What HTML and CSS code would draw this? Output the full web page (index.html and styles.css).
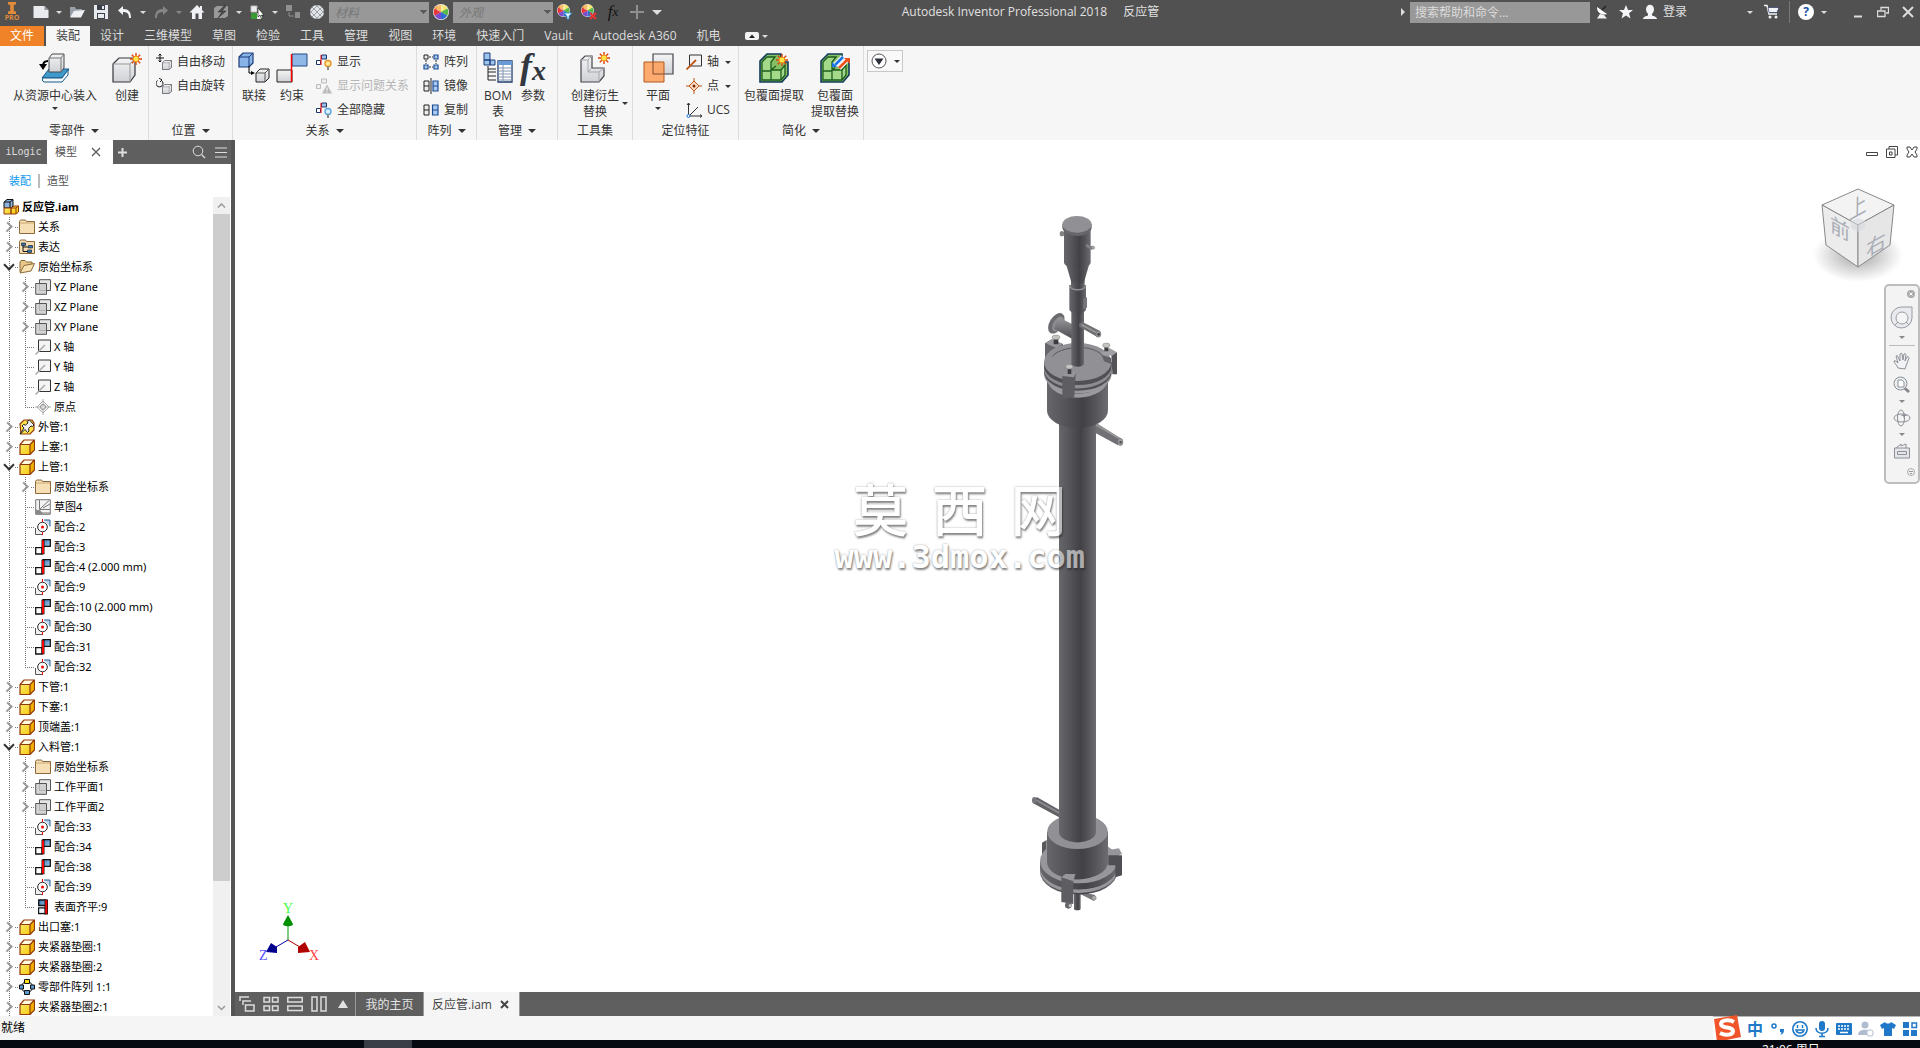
FILE: index.html
```html
<!DOCTYPE html>
<html lang="zh-CN">
<head>
    <meta charset="UTF-8">
    <meta name="viewport" content="width=device-width, initial-scale=1.0">
    <title>Autodesk Inventor Professional 2018 - 反应管</title>
    <link rel="stylesheet" href="styles.css">
</head>
<body>
    <!-- shared icons -->
    <svg class="sprite" aria-hidden="true">
        <defs>
            <linearGradient id="gYellow" x1="0" y1="0" x2="1" y2="1"><stop offset="0" stop-color="#fff27a"/><stop offset="1" stop-color="#f2c200"/></linearGradient>
            <linearGradient id="gBlue" x1="0" y1="0" x2="1" y2="1"><stop offset="0" stop-color="#3f80ba"/><stop offset="1" stop-color="#a4c9e8"/></linearGradient>
            <linearGradient id="gGray" x1="0" y1="0" x2="0" y2="1"><stop offset="0" stop-color="#f4f4f4"/><stop offset="1" stop-color="#cfd1d6"/></linearGradient>
        </defs>
        <symbol id="part" viewBox="0 0 16 16"><path d="M1 5.500 5 1h10.500v10l-4.500 4.500H1z" fill="url(#gYellow)"/><path d="M1 5.500 5 1h10.500L11 5.500z" fill="#fffce0"/><path d="M11 5.500 15.500 1v10L11 15.500z" fill="#f0b000"/><path d="M1 5.500 5 1h10.500v10L11 15.500H1zM1 5.500h10v10M11 5.500 15.500 1" fill="none" stroke="#93390a" stroke-width="1.200"/></symbol>
        <symbol id="pinned" viewBox="0 0 16 16"><path d="M1 5 5 1h8l2 3v7l-4 4H2z" fill="#ffe14a" stroke="#93390a" stroke-width="1.200"/><path d="M8 2.500 10.500 1l4.500 5-1.500 1.500-1.500-.5-2.500 2.500.5 2.500-1.500 1.500-2.500-3L2 14.500l-1 .5 4-6-2-2 1.500-1.500 2 .5L9 4z" fill="#eee" stroke="#111" stroke-width=".9"/></symbol>
        <symbol id="asm" viewBox="0 0 16 16"><path d="M1 3 4 .5h6V7L8 9H1z" fill="#8cb4dc" stroke="#111"/><path d="M1 3h6v6M7 3l3-2.500" fill="none" stroke="#111"/><path d="M1 9h7v6H1zM8 9l3-2h4.500v6L13 15H8z" fill="url(#gYellow)" stroke="#93390a"/><path d="M8 9h5v6M13 9l2.500-2" fill="none" stroke="#93390a"/></symbol>
        <symbol id="folder" viewBox="0 0 16 16"><path d="M.5 14.500v-12l1-1.500h5l1 1.500h8v12z" fill="#f6dfb4" stroke="#8a6a3a"/><path d="M1 4h14" stroke="#c9a870"/></symbol>
        <symbol id="folderOpen" viewBox="0 0 16 16"><path d="M1 13V3l1-1.500h4L7.500 3H13v3" fill="#e9c78a" stroke="#8a6a3a"/><path d="M1 14 5 6.500l10.500-2L12 12z" fill="#f8e2b4" stroke="#8a6a3a"/></symbol>
        <symbol id="rep" viewBox="0 0 16 16"><path d="M.5 14.500v-12l1-1.500h5l1 1.500h8v12z" fill="#f6dfb4" stroke="#8a6a3a"/><path d="M4 6v6.500h5M4 8h5" fill="none" stroke="#111"/><path d="M2.500 4h4v2.500h-4zM9.500 6.500h4V9h-4zM8.500 11h4v2.500h-4z" fill="#3d78b0" stroke="#123" stroke-width=".7"/></symbol>
        <symbol id="plane" viewBox="0 0 16 16"><path d="M4.500.7h11v10.800h-11z" fill="#e6e6e6" stroke="#555"/><path d="M.7 4.500h10.800v10.800H.7z" fill="#c9c9c9" fill-opacity=".8" stroke="#555"/></symbol>
        <symbol id="axis" viewBox="0 0 16 16"><path d="M3.500 1h12v11.500h-12z" fill="#f4f4f4" stroke="#333"/><path d="M.5 15.500 10 6" stroke="#aaa" stroke-width="1.500"/></symbol>
        <symbol id="origin" viewBox="0 0 16 16"><path d="M8 2l6 6-6 6-6-6zM8 0v5M8 11v5M0 8h5M11 8h5" fill="none" stroke="#aaa"/><circle cx="8" cy="8" r="2.500" fill="#ddd" stroke="#888"/></symbol>
        <symbol id="sketch" viewBox="0 0 16 16"><path d="M.7.700h14.600v14.600H.7z" fill="#f3f3f3" stroke="#777"/><path d="M4.500 1v9.500H15M1 10.500 4.500 14 15 14M5 10l9-8.500M8 9l7-4" fill="none" stroke="#777"/><path d="M1 11h4l3 4H1z" fill="#888"/></symbol>
        <symbol id="insert" viewBox="0 0 16 16"><path d="M9 1h6v6.500" fill="#b9d6ee" stroke="#2c5f93"/><path d="M.5 9v6.500H7" fill="#eee" stroke="#555"/><circle cx="7.500" cy="8" r="4.800" fill="#fff" stroke="#222"/><circle cx="7.500" cy="8" r="1.500" fill="#e00"/><path d="M7.500 0v3M7.500 13v3" stroke="#e00"/></symbol>
        <symbol id="mate" viewBox="0 0 16 16"><path d="M.7 8.700H7V15H.7z" fill="#fff" stroke="#111" stroke-width="1.300"/><path d="M8 .7h7.300v6.600H8z" fill="url(#gBlue)" stroke="#111" stroke-width="1.300"/><path d="M6.500.7h3v14.600h-3z" fill="#111"/><path d="M7 1.500h2v13H7z" fill="#f00"/></symbol>
        <symbol id="flush" viewBox="0 0 16 16"><path d="M3.700 1h7v5.500h-7zM3.700 9h7v5.500h-7z" fill="url(#gBlue)" stroke="#111" stroke-width="1.300"/><path d="M4.300 9.600h5v4.200h-5z" fill="#eef4fa"/><path d="M9.500.5h3.500v15H9.500z" fill="#111"/><path d="M10.300 1.200h2v13.500h-2z" fill="#f00"/></symbol>
        <symbol id="ring" viewBox="0 0 16 16"><circle cx="8" cy="8" r="5.500" fill="none" stroke="#111"/><path d="M5.500.5h5v4h-5z" fill="#ffe11a" stroke="#111"/><path d="M.5 6h4v4h-4zM11.500 6h4v4h-4zM5.500 11.500h5v4h-5z" fill="#5b9bd0" stroke="#111"/></symbol>

        <symbol id="wheel" viewBox="0 0 16 16"><circle cx="8" cy="8" r="8" fill="#eee"/><path d="M8 8V.7A7.300 7.300 0 0 0 1.700 4.400z" fill="#f7941d"/><path d="M8 8V.7a7.300 7.300 0 0 1 6.300 3.700z" fill="#f5e663"/><path d="M8 8l6.300-3.600a7.300 7.300 0 0 1 0 7.200z" fill="#59b947"/><path d="M8 8l6.300 3.600A7.300 7.300 0 0 1 8 15.300z" fill="#2d6fd0"/><path d="M8 8v7.300a7.300 7.300 0 0 1-6.300-3.700z" fill="#7b4bd0"/><path d="M8 8l-6.300 3.600a7.300 7.300 0 0 1 0-7.200z" fill="#e8373b"/><circle cx="7" cy="4" r="3.500" fill="#fff" opacity=".35"/></symbol>
        <symbol id="star" viewBox="0 0 12 12"><path d="M6 0v12M0 6h12M1.800 1.800l8.400 8.400M10.200 1.800 1.800 10.200" stroke="#d8420e" stroke-width="1.400"/><circle cx="6" cy="6" r="3" fill="#ffe34a" stroke="#f28c1a"/></symbol>
        <symbol id="cubeSm" viewBox="0 0 16 16"><path d="M.6 4.500 4.500.600h10.900v10.800l-4 4H.600z" fill="url(#gGray)" stroke="#44474d" stroke-width="1.200"/><path d="M.6 4.500h10.800v10.900M11.400 4.500l4-3.900" fill="none" stroke="#8a8d94"/></symbol>
    </svg>

    <header class="titlebar">
        <div class="qat">
            <button class="pro" aria-label="应用程序菜单"><svg width="10" height="12" viewBox="0 0 10 12"><path d="M1 0h8v2.500L6.800 3v6l2.200.5V12H1V9.500L3.200 9V3L1 2.500z" fill="#e08a3a"/></svg><span>PRO</span></button>
            <button class="tool" aria-label="新建"><svg width="16" height="14" viewBox="0 0 16 14"><path d="M.5 1h11l4 4v8H.5z" fill="#e9ebee"/><path d="M11.500 1v4h4z" fill="#8d929b"/></svg></button>
            <button class="drop" aria-label="更多"></button>
            <button class="tool" aria-label="打开"><svg width="16" height="14" viewBox="0 0 16 14"><path d="M1 12V2h5l1 2h6v2" fill="#999fa8"/><path d="M1 12.500 5 6l11-1-4 7.500z" fill="#eef0f3"/></svg></button>
            <button class="tool" aria-label="保存"><svg width="16" height="16" viewBox="0 0 16 16"><path d="M1 1h14v14H1z" fill="#e6e9ee"/><path d="M4 1h8v5H4zM4 9h8v6H4z" fill="#3d4048"/><path d="M5 10h6v4H5zM9 2h2v3H9z" fill="#e6e9ee"/></svg></button>
            <button class="tool" aria-label="放弃"><svg width="16" height="14" viewBox="0 0 16 14"><path d="M1 5.500 6 1v3c6 0 8 3 8 9h-2c0-4-1.500-6-6-6v3z" fill="#f2f3f5"/></svg></button>
            <button class="drop" aria-label="更多"></button>
            <button class="tool" aria-label="重做"><svg width="16" height="14" viewBox="0 0 16 14"><path d="M15 5.500 10 1v3c-6 0-8 3-8 9h2c0-4 1.500-6 6-6v3z" fill="#858585"/></svg></button>
            <button class="drop dim" aria-label="更多"></button>
            <button class="tool" aria-label="主页"><svg width="16" height="16" viewBox="0 0 16 16"><path d="M8 1 .5 8.500H3V15h10V8.500h2.500L13 6V2h-2v2z" fill="#f0f1f4"/><path d="M6.500 9.500h3V15h-3z" fill="#4a4d55"/></svg></button>
            <button class="tool" aria-label="更新"><svg width="16" height="16" viewBox="0 0 16 16"><path d="M1 4 4 2h11v10l-3 2H1z" fill="#9a9a9a"/><path d="M12 1 5 8h4l-4 6 8-7H9l4-5z" fill="#4a4a4a" stroke="#333" stroke-width=".6"/></svg></button>
            <button class="drop" aria-label="更多"></button>
            <button class="tool" aria-label="选择"><svg width="16" height="16" viewBox="0 0 16 16"><path d="M2 2h6v6H2z" fill="#eee" stroke="#bbb"/><path d="M2 9h6v6H2z" fill="#3a9b35"/><path d="M8 9h4v6H8z" fill="#eee"/><path d="M9 4v9l2-2 1.500 4 1.500-.5L12.500 11H15z" fill="#fff" stroke="#222" stroke-width=".7"/></svg></button>
            <button class="drop" aria-label="更多"></button>
            <button class="tool" aria-label="零部件"><svg width="16" height="16" viewBox="0 0 16 16"><path d="M1 1h6v6H1zM10 8h5v6h-5z" fill="#8f8f8f"/><path d="M4 8v4h5" fill="none" stroke="#8f8f8f"/></svg></button>
            <button class="tool" aria-label="材料浏览器"><svg width="16" height="16" viewBox="0 0 16 16"><circle cx="8" cy="8" r="7" fill="#e2e4e8"/><path d="M3 3l10 10M1 7l8 8M7 1l8 8M13 3 3 13M9 1 1 9M15 7l-8 8" stroke="#8a8e98" stroke-width=".8"/></svg></button>
            <select class="combo" aria-label="材料" disabled><option>材料</option></select>
            <button class="tool" aria-label="外观浏览器"><svg width="16" height="16"><use href="#wheel"/></svg></button>
            <select class="combo" aria-label="外观" disabled><option>外观</option></select>
            <button class="tool" aria-label="调整"><svg width="16" height="16" viewBox="0 0 16 16"><use href="#wheel" width="13" height="13"/><path d="M7 9h8l-3 3v3h-2v-3z" fill="#e8f6ff" stroke="#2a8fd0" stroke-width=".8"/></svg></button>
            <button class="tool" aria-label="清除"><svg width="16" height="16" viewBox="0 0 16 16"><use href="#wheel" width="13" height="13"/><path d="M9 9l6 6M15 9l-6 6" stroke="#e33" stroke-width="2"/></svg></button>
            <button class="tool fx" aria-label="参数"><i>f</i><sub>x</sub></button>
            <button class="tool" aria-label="添加"><svg width="14" height="14"><path d="M7 0v14M0 7h14" stroke="#8f8f8f" stroke-width="2"/></svg></button>
            <button class="drop custom" aria-label="自定义快速访问工具栏"></button>
        </div>
        <div class="caption"><span>Autodesk Inventor Professional 2018</span><span>反应管</span></div>
        <div class="infocenter">
            <button class="expand" aria-label="展开"></button>
            <input class="search" type="text" aria-label="搜索" placeholder="搜索帮助和命令...">
            <button class="tool" aria-label="通讯中心"><svg width="14" height="16" viewBox="0 0 14 16"><path d="M2 3c0 6 5 9 10 7z" fill="#fff"/><path d="M7 6l4-4" stroke="#222" stroke-width="1.500"/><path d="M5 10l-3 4.500h10L9 11z" fill="#f2f2f4"/></svg></button>
            <button class="tool" aria-label="收藏夹"><svg width="16" height="16" viewBox="0 0 16 16"><path d="M8 1l2 5h5l-4 3.300 1.500 5.200L8 11.500l-4.500 3L5 9.300 1 6h5z" fill="#f6f6f8"/></svg></button>
            <button class="login"><svg width="16" height="16" viewBox="0 0 16 16"><ellipse cx="8" cy="5.500" rx="4" ry="4.800" fill="#f2f3f6"/><path d="M1 15c0-2 3-3 5-3.500V9h4v2.500c2 .5 5 1.500 5 3.500z" fill="#f2f3f6"/></svg><span>登录</span></button>
            <button class="drop" aria-label="帐户"></button>
            <button class="tool cart" aria-label="应用商店"><svg width="16" height="16" viewBox="0 0 16 16"><path d="M0 1.500h3l2 8.500h8" fill="none" stroke="#f2f3f6" stroke-width="1.500"/><path d="M4 3.500h11l-2 5H5z" fill="#f2f3f6" stroke="#1d2a5c" stroke-width=".6"/><circle cx="6" cy="13" r="1.500" fill="#f2f3f6"/><circle cx="12" cy="13" r="1.500" fill="#f2f3f6"/></svg></button>
            <button class="tool help" aria-label="帮助"><span>?</span></button>
            <button class="drop" aria-label="更多"></button>
            <div class="winbtns">
                <button aria-label="最小化"><svg width="12" height="12"><path d="M2 10.500h8" stroke="#ddd" stroke-width="2"/></svg></button>
                <button aria-label="还原"><svg width="12" height="12"><path d="M4 4V1.500h7.500V7H9M.5 5H8v5.500H.5z" fill="none" stroke="#ddd" stroke-width="1.300"/></svg></button>
                <button aria-label="关闭"><svg width="12" height="12"><path d="M1 1l10 10M11 1 1 11" stroke="#ddd" stroke-width="2"/></svg></button>
            </div>
        </div>
    </header>

    <nav class="tabs">
        <button class="tab file">文件</button>
        <button class="tab active">装配</button>
        <button class="tab">设计</button>
        <button class="tab">三维模型</button>
        <button class="tab">草图</button>
        <button class="tab">检验</button>
        <button class="tab">工具</button>
        <button class="tab">管理</button>
        <button class="tab">视图</button>
        <button class="tab">环境</button>
        <button class="tab">快速入门</button>
        <button class="tab">Vault</button>
        <button class="tab">Autodesk A360</button>
        <button class="tab">机电</button>
        <button class="tab-toggle" aria-label="最小化功能区"><svg width="14" height="8"><rect width="14" height="8" rx="2" fill="#f2f2f2"/><path d="M4 6h6L7 2.500z" fill="#222"/></svg></button>
        <button class="drop" aria-label="更多"></button>
    </nav>

    <section class="ribbon">
        <div class="panel p-component">
            <div class="tools">
                <button class="big"><svg width="32" height="32" viewBox="0 0 32 32"><path d="M3 26l7-9h20l-7 9z" fill="#3d9acb" stroke="#185a87"/><path d="M4 26h19l6-8v5l-6 7H5c-2-1-2-3-1-4z" fill="#f4f8fb" stroke="#185a87"/><path d="M10 6l3-4h12v14l-3 4H10z" fill="url(#gGray)" stroke="#44474d"/><path d="M10 6h12v14M22 6l3-4" fill="none" stroke="#777"/><path d="M9 9c-4 0-5 2-5 5" fill="none" stroke="#000" stroke-width="2"/><path d="M0 12h8l-4 6z"/></svg><span>从资源中心装入</span><b class="caret"></b></button>
                <button class="big"><svg width="32" height="32" viewBox="0 0 32 32"><path d="M2 12l6-6h16v17l-5 7H2z" fill="url(#gGray)" stroke="#33363c" stroke-width="1.200"/><path d="M2 12h17v18M19 12l5-6" fill="none" stroke="#999"/><use href="#star" x="19" y="1" width="12" height="12"/></svg><span>创建</span></button>
            </div>
            <button class="panel-title">零部件<b class="caret wide"></b></button>
        </div>
        <div class="panel p-position">
            <div class="tools"><div class="stack">
                <button class="small"><svg width="16" height="16" viewBox="0 0 16 16"><path d="M4 0v8M0 4h8M2.500 1.500 4 0l1.500 1.500M2.500 6.500 4 8l1.500-1.500" fill="none" stroke="#111"/><use href="#cubeSm" x="6" y="6" width="10" height="10"/></svg><span>自由移动</span></button>
                <button class="small"><svg width="16" height="16" viewBox="0 0 16 16"><path d="M1.500 2.500a3.500 3.500 0 1 0 4 0M3 0l3 2-2 2" fill="none" stroke="#111"/><use href="#cubeSm" x="6" y="6" width="10" height="10"/></svg><span>自由旋转</span></button>
            </div></div>
            <button class="panel-title">位置<b class="caret wide"></b></button>
        </div>
        <div class="panel p-relation">
            <div class="tools">
                <button class="big"><svg width="32" height="32" viewBox="0 0 32 32"><path d="M1 5l4-4h10v10l-4 4H1z" fill="#88b4e8" stroke="#1c3c7a" stroke-width="1.200"/><path d="M1 5h10v10M11 5l4-4" fill="none" stroke="#1c3c7a"/><path d="M18 21l4-4h9v9l-4 4h-9z" fill="url(#gGray)" stroke="#222"/><path d="M18 21h9v9M27 21l4-4" fill="none" stroke="#555"/><path d="M11 14v7h3" fill="none" stroke="#000"/><path d="M13 19l4 2-4 2z"/></svg><span>联接</span></button>
                <button class="big"><svg width="32" height="32" viewBox="0 0 32 32"><path d="M16 2h15v12H16z" fill="#8fb8e6" stroke="#234a86"/><path d="M1 18h15v12H1z" fill="url(#gGray)" stroke="#222"/><path d="M15.500 2v28" stroke="#f00" stroke-width="1.500"/></svg><span>约束</span></button>
                <div class="stack">
                    <button class="small"><svg width="16" height="16" viewBox="0 0 16 16"><path d="M.5 6.500h4v4h-4z" fill="#fff" stroke="#17346b"/><path d="M5.500 1h5v4h-5z" fill="#9cc0ea" stroke="#17346b"/><path d="M5 1v10" stroke="#f00"/><circle cx="12" cy="9.500" r="3" fill="#ffe9a0" stroke="#e9931a" stroke-width="1.300"/><path d="M11 12.500h2V16h-2z" fill="#888"/></svg><span>显示</span></button>
                    <button class="small" disabled><svg width="16" height="16" viewBox="0 0 16 16"><path d="M.5 6.500h4v4h-4zM5.500 1h5v4h-5z" fill="#eee" stroke="#bbb"/><path d="M11 6.500l5 9H6z" fill="#bbb"/><path d="M11 9.500v3M11 13.500v1" stroke="#fff"/></svg><span>显示问题关系</span></button>
                    <button class="small"><svg width="16" height="16" viewBox="0 0 16 16"><path d="M.5 6.500h4v4h-4z" fill="#fff" stroke="#17346b"/><path d="M5.500 1h5v4h-5z" fill="#9cc0ea" stroke="#17346b"/><path d="M5 1v10" stroke="#f00"/><circle cx="12" cy="9.500" r="3" fill="#d8efff" stroke="#5aa2dd" stroke-width="1.300"/><path d="M11 12.500h2V16h-2z" fill="#888"/></svg><span>全部隐藏</span></button>
                </div>
            </div>
            <button class="panel-title">关系<b class="caret wide"></b></button>
        </div>
        <div class="panel p-pattern">
            <div class="tools"><div class="stack">
                <button class="small"><svg width="16" height="16" viewBox="0 0 16 16"><path d="M1 1h4v4H1z" fill="#eee" stroke="#222"/><path d="M11 1h4v4h-4zM1 11h4v4H1zM11 11h4v4h-4z" fill="#a9caf0" stroke="#1d4c94" stroke-width="1.200"/><path d="M6 3h4M3 6v4M6 13h4M13 6v4" stroke="#222" stroke-dasharray="2 1"/></svg><span>阵列</span></button>
                <button class="small"><svg width="16" height="16" viewBox="0 0 16 16"><path d="M1 3h5v10H1zM1 8h5" fill="#eee" stroke="#222"/><path d="M10 3h5v10h-5zM10 8h5" fill="#a9caf0" stroke="#1d4c94" stroke-width="1.200"/><path d="M8 0v16" stroke="#222"/></svg><span>镜像</span></button>
                <button class="small"><svg width="16" height="16" viewBox="0 0 16 16"><path d="M1 3h5v10H1zM1 8h5" fill="#eee" stroke="#222"/><path d="M9.500 3h5.500v10H9.500zM9.500 8H15" fill="#a9caf0" stroke="#1d4c94" stroke-width="1.200"/></svg><span>复制</span></button>
            </div></div>
            <button class="panel-title">阵列<b class="caret wide"></b></button>
        </div>
        <div class="panel p-manage">
            <div class="tools">
                <button class="big"><svg width="32" height="32" viewBox="0 0 32 32"><path d="M2 1h6v7H2zM2 8h6v5H2zM8 8h5v5H8z" fill="#9cc4ee" stroke="#1c3c7a"/><path d="M6 14v14M6 17h8M6 20h8M6 24h8M6 28h8" stroke="#222" fill="none"/><path d="M16 9h14v21H16z" fill="#fff" stroke="#1f3d6b" stroke-width="1.300"/><path d="M16 9h14v4H16z" fill="#6b9bd6"/><path d="M16 16h14M16 19h14M16 22h14M16 25h14M16 28h14M21 13v17" stroke="#8195b0"/></svg><span>BOM<br>表</span></button>
                <button class="big"><span class="fxbig"><i>f</i><i class="x">x</i></span><span>参数</span></button>
            </div>
            <button class="panel-title">管理<b class="caret wide"></b></button>
        </div>
        <div class="panel p-toolset">
            <div class="tools">
                <button class="big"><svg width="32" height="32" viewBox="0 0 32 32"><path d="M2 8l4-4h7v12h12v8l-5 6H2z" fill="url(#gGray)" stroke="#44474d" stroke-width="1.200"/><path d="M2 8h7v12h11v10M9 8l4-4M9 20l4-4M20 20l5-4" fill="none" stroke="#a5a8ae"/><use href="#star" x="19" y="0" width="12" height="12"/></svg><span>创建衍生<br>替换</span></button>
                <b class="caret side"></b>
            </div>
            <span class="panel-title">工具集</span>
        </div>
        <div class="panel p-feature">
            <div class="tools">
                <button class="big"><svg width="32" height="32" viewBox="0 0 32 32"><path d="M11 2h20v20H11z" fill="url(#gGray)" stroke="#44474d" stroke-width="1.200"/><path d="M2 10h20v20H2z" fill="#ff9e57" fill-opacity=".85" stroke="#b05a20"/><path d="M11 10v12h11" fill="none" stroke="#87583c"/></svg><span>平面</span><b class="caret"></b></button>
                <div class="stack">
                    <button class="small"><svg width="16" height="16" viewBox="0 0 16 16"><path d="M3.500 1h12v11h-12z" fill="#f4f4f4" stroke="#333"/><path d="M.5 15.500 10 6" stroke="#c1561a" stroke-width="1.800"/></svg><span>轴</span><b class="caret"></b></button>
                    <button class="small"><svg width="16" height="16" viewBox="0 0 16 16"><path d="M8 3l5 5-5 5-5-5z" fill="#ffd9bd" stroke="#c1561a"/><path d="M8 0v4M8 12v4M0 8h4M12 8h4" stroke="#c1561a"/><circle cx="8" cy="8" r="1.500" fill="#7a2d05"/></svg><span>点</span><b class="caret"></b></button>
                    <button class="small"><svg width="16" height="16" viewBox="0 0 16 16"><path d="M2.500 1v13H16M3 14 12 5M1 3l1.500-2L4 3M14 12.500l2 1.500-2 1.500" fill="none" stroke="#333"/><circle cx="2.500" cy="14" r="1.500" fill="#fff" stroke="#1a73d9"/></svg><span>UCS</span></button>
                </div>
            </div>
            <span class="panel-title">定位特征</span>
        </div>
        <div class="panel p-simplify">
            <div class="tools">
                <button class="big"><svg width="32" height="32" viewBox="0 0 32 32"><path d="M2 9l7-7h14v8h7v13l-6 7H2z" fill="#86c063" stroke="#123a5c" stroke-width="1.600"/><path d="M4 10l5-5h8l-4 5v8h10l4-5v10l-4 5H4zM4 19h9v9M13 18l5-4M23 18v10" fill="#a5d98a" stroke="#1d5c1d" stroke-width="1.300"/><use href="#star" x="18" y="2" width="12" height="12"/></svg><span>包覆面提取</span></button>
                <button class="big"><svg width="32" height="32" viewBox="0 0 32 32"><path d="M2 9l7-7h14v8h7v13l-6 7H2z" fill="#86c063" stroke="#123a5c" stroke-width="1.600"/><path d="M4 10l5-5h8l-4 5v8h10l4-5v10l-4 5H4zM4 19h9v9M13 18l5-4M23 18v10" fill="#a5d98a" stroke="#1d5c1d" stroke-width="1.300"/><path d="M24 5l-9 9M20 16l9-9" stroke="#f6f6f6" stroke-width="5"/><path d="M24 5l-8 8" stroke="#1a73e8" stroke-width="2.500"/><path d="M13 10v5h5z" fill="#1a73e8"/><path d="M20 16l8-8" stroke="#f0501a" stroke-width="2.500"/><path d="M25 6h6v6z" fill="#f0501a"/></svg><span>包覆面<br>提取替换</span></button>
            </div>
            <button class="panel-title">简化<b class="caret wide"></b></button>
        </div>
        <button class="ribbon-more" aria-label="显示面板"><svg width="16" height="16"><circle cx="8" cy="8" r="7" fill="#fff" stroke="#555"/><path d="M3.500 5.500h9L8 12z" fill="#2b3038"/></svg><b class="caret"></b></button>
    </section>

    <div class="workspace">
        <aside class="browser">
            <div class="browser-tabs">
                <button class="btab ilogic">iLogic</button>
                <div class="btab on"><span>模型</span><button aria-label="关闭模型"><svg width="10" height="10"><path d="M1 1l8 8M9 1 1 9" stroke="#555" stroke-width="1.200"/></svg></button></div>
                <button class="add" aria-label="添加面板"><svg width="9" height="9"><path d="M4.500 0v9M0 4.500h9" stroke="#ddd" stroke-width="2"/></svg></button>
                <button aria-label="查找"><svg width="14" height="14"><circle cx="6" cy="6" r="4.800" fill="none" stroke="#ddd"/><path d="M9.500 9.500 13 13" stroke="#ddd" stroke-width="1.300"/></svg></button>
                <button aria-label="菜单"><svg width="12" height="11"><path d="M0 1h12M0 5.500h12M0 10h12" stroke="#ddd" stroke-width="1.200"/></svg></button>
            </div>
            <div class="modes"><a class="current" href="#assembly">装配</a><a href="#modeling">造型</a></div>
            <div class="tree-wrap">
                <div class="tree">
                    <div class="root"><svg class="ico"><use href="#asm"/></svg>反应管.iam</div>
                    <ul>
                        <li><div class="row"><button class="twist" aria-label="展开"></button><svg class="ico"><use href="#folder"/></svg>关系</div></li>
                        <li><div class="row"><button class="twist" aria-label="展开"></button><svg class="ico"><use href="#rep"/></svg>表达</div></li>
                        <li><div class="row"><button class="twist open" aria-label="折叠"></button><svg class="ico"><use href="#folderOpen"/></svg>原始坐标系</div>
                            <ul>
                                <li><div class="row"><button class="twist" aria-label="展开"></button><svg class="ico"><use href="#plane"/></svg>YZ Plane</div></li>
                                <li><div class="row"><button class="twist" aria-label="展开"></button><svg class="ico"><use href="#plane"/></svg>XZ Plane</div></li>
                                <li><div class="row"><button class="twist" aria-label="展开"></button><svg class="ico"><use href="#plane"/></svg>XY Plane</div></li>
                                <li><div class="row leaf"><svg class="ico"><use href="#axis"/></svg>X 轴</div></li>
                                <li><div class="row leaf"><svg class="ico"><use href="#axis"/></svg>Y 轴</div></li>
                                <li><div class="row leaf"><svg class="ico"><use href="#axis"/></svg>Z 轴</div></li>
                                <li><div class="row leaf"><svg class="ico"><use href="#origin"/></svg>原点</div></li>
                            </ul>
                        </li>
                        <li><div class="row"><button class="twist" aria-label="展开"></button><svg class="ico"><use href="#pinned"/></svg>外管:1</div></li>
                        <li><div class="row"><button class="twist" aria-label="展开"></button><svg class="ico"><use href="#part"/></svg>上塞:1</div></li>
                        <li><div class="row"><button class="twist open" aria-label="折叠"></button><svg class="ico"><use href="#part"/></svg>上管:1</div>
                            <ul>
                                <li><div class="row"><button class="twist" aria-label="展开"></button><svg class="ico"><use href="#folder"/></svg>原始坐标系</div></li>
                                <li><div class="row leaf"><svg class="ico"><use href="#sketch"/></svg>草图4</div></li>
                                <li><div class="row leaf"><svg class="ico"><use href="#insert"/></svg>配合:2</div></li>
                                <li><div class="row leaf"><svg class="ico"><use href="#mate"/></svg>配合:3</div></li>
                                <li><div class="row leaf"><svg class="ico"><use href="#mate"/></svg>配合:4 (2.000 mm)</div></li>
                                <li><div class="row leaf"><svg class="ico"><use href="#insert"/></svg>配合:9</div></li>
                                <li><div class="row leaf"><svg class="ico"><use href="#mate"/></svg>配合:10 (2.000 mm)</div></li>
                                <li><div class="row leaf"><svg class="ico"><use href="#insert"/></svg>配合:30</div></li>
                                <li><div class="row leaf"><svg class="ico"><use href="#mate"/></svg>配合:31</div></li>
                                <li><div class="row leaf"><svg class="ico"><use href="#insert"/></svg>配合:32</div></li>
                            </ul>
                        </li>
                        <li><div class="row"><button class="twist" aria-label="展开"></button><svg class="ico"><use href="#part"/></svg>下管:1</div></li>
                        <li><div class="row"><button class="twist" aria-label="展开"></button><svg class="ico"><use href="#part"/></svg>下塞:1</div></li>
                        <li><div class="row"><button class="twist" aria-label="展开"></button><svg class="ico"><use href="#part"/></svg>顶端盖:1</div></li>
                        <li><div class="row"><button class="twist open" aria-label="折叠"></button><svg class="ico"><use href="#part"/></svg>入料管:1</div>
                            <ul>
                                <li><div class="row"><button class="twist" aria-label="展开"></button><svg class="ico"><use href="#folder"/></svg>原始坐标系</div></li>
                                <li><div class="row"><button class="twist" aria-label="展开"></button><svg class="ico"><use href="#plane"/></svg>工作平面1</div></li>
                                <li><div class="row"><button class="twist" aria-label="展开"></button><svg class="ico"><use href="#plane"/></svg>工作平面2</div></li>
                                <li><div class="row leaf"><svg class="ico"><use href="#insert"/></svg>配合:33</div></li>
                                <li><div class="row leaf"><svg class="ico"><use href="#mate"/></svg>配合:34</div></li>
                                <li><div class="row leaf"><svg class="ico"><use href="#mate"/></svg>配合:38</div></li>
                                <li><div class="row leaf"><svg class="ico"><use href="#insert"/></svg>配合:39</div></li>
                                <li><div class="row leaf"><svg class="ico"><use href="#flush"/></svg>表面齐平:9</div></li>
                            </ul>
                        </li>
                        <li><div class="row"><button class="twist" aria-label="展开"></button><svg class="ico"><use href="#part"/></svg>出口塞:1</div></li>
                        <li><div class="row"><button class="twist" aria-label="展开"></button><svg class="ico"><use href="#part"/></svg>夹紧器垫圈:1</div></li>
                        <li><div class="row"><button class="twist" aria-label="展开"></button><svg class="ico"><use href="#part"/></svg>夹紧器垫圈:2</div></li>
                        <li><div class="row"><button class="twist" aria-label="展开"></button><svg class="ico"><use href="#ring"/></svg>零部件阵列 1:1</div></li>
                        <li><div class="row"><button class="twist" aria-label="展开"></button><svg class="ico"><use href="#part"/></svg>夹紧器垫圈2:1</div></li>
                    </ul>
                </div>
                <div class="scrollbar">
                    <svg width="17" height="17"><path d="M5 10.500 8.500 7l3.500 3.500" fill="none" stroke="#999" stroke-width="1.500"/></svg>
                    <div class="thumb"></div>
                    <svg width="17" height="17"><path d="M5 7l3.500 3.500L12 7" fill="none" stroke="#999" stroke-width="1.500"/></svg>
                </div>
            </div>
        </aside>

        <main class="document">
            <div class="canvas">
                <svg class="model" viewBox="0 0 540 2160" role="img" aria-label="反应管模型">
                    <defs>
                        <linearGradient id="tube"><stop offset="0" stop-color="#67676b"/><stop offset=".25" stop-color="#58585c"/><stop offset=".58" stop-color="#424246"/><stop offset=".75" stop-color="#505055"/><stop offset="1" stop-color="#6c6c71"/></linearGradient>
                        <linearGradient id="rod" x1="0" y1="0" x2="0" y2="1"><stop offset="0" stop-color="#99999c"/><stop offset="1" stop-color="#4e4e52"/></linearGradient>
                    </defs>
                    <!-- side pipes behind the main tube -->
                    <path d="M300 672l14-6 80 50-10 20-84-46z" fill="#717175"/>
                    <path d="M314 672l76 44" stroke="#98989b" stroke-width="5"/>
                    <ellipse cx="391" cy="726" rx="8" ry="11" fill="#9b9b9e" stroke="#555"/><circle cx="392" cy="727" r="4" fill="#555"/>
                    <path d="M140 1791l70 40v22l-82-44z" fill="#626266"/><path d="M138 1800l72 40" stroke="#8c8c90" stroke-width="6"/><ellipse cx="133" cy="1801" rx="7" ry="10" fill="#77777b"/>
                    <!-- upper flange and clamps -->
                    <path d="M165 430l20-12 34 14v40l-54 10z" fill="#66666a"/><path d="M167 430l18-12 32 14-18 12z" fill="#9a9a9e"/>
                    <path d="M207 640h111v1270H207z" fill="url(#tube)"/>
                    <path d="M171 520v112a91 52 0 0 0 183 0V520z" fill="url(#tube)"/>
                    <path d="M172 536a91 57 0 0 0 182 0l-8-20H180z" fill="#9b9b9f"/>
                    <path d="M172 524a91 57 0 0 0 182 0l-8-20H180z" fill="url(#tube)"/>
                    <path d="M162 507a101 57 0 0 0 203 0v15a101 58 0 0 1-203 0z" fill="#99999d"/>
                    <path d="M162 487v28a101 57 0 0 0 203 0v-28z" fill="#515155"/>
                    <path d="M162 498v10a101 57 0 0 0 203 0v-10a101 57 0 0 1-203 0z" fill="#8d8d91"/>
                    <path d="M162 487v8a101 57 0 0 0 203 0v-8z" fill="#515155"/>
                    <ellipse cx="263" cy="486" rx="101" ry="57" fill="#919195"/>
                    <path d="M188 469c15-28 130-44 154 6" fill="none" stroke="#5c5c60" stroke-width="3"/>
                    <path d="M364 462l17-5v66h-14z" fill="#535357"/><path d="M334 458l24-14 23 13-15 10-25-3z" fill="#a0a0a4"/><path d="M336 466l28 8v18l-22-8z" fill="#626266"/>
                    <path d="M217 528l8-8 32 2-4 68-36 8z" fill="#5e5e62"/><path d="M217 528l12-16 28 6-5 14z" fill="#95959a"/>
                    <!-- bolts -->
                    <path d="M191 415h14v18h-14zM343 440h12v14h-12zM233 508h11v14h-11z" fill="#3c3c40"/>
                    <ellipse cx="198" cy="412" rx="12" ry="7" fill="#c3c3bf" stroke="#555"/><ellipse cx="349" cy="436" rx="11" ry="7" fill="#c3c3bf" stroke="#555"/><ellipse cx="238" cy="500" rx="11" ry="7" fill="#c3c3bf" stroke="#555"/>
                    <!-- side inlet -->
                    <ellipse cx="199" cy="370" rx="20" ry="34" fill="#6c6c70" transform="rotate(32 199 370)"/><ellipse cx="204" cy="372" rx="14" ry="25" fill="#8d8d91" transform="rotate(32 204 372)"/>
                    <path d="M206 352l40 20v44l-54-30z" fill="url(#rod)"/>
                    <!-- feed pipe -->
                    <path d="M244 325v166a19 9 0 0 0 38 0V325z" fill="url(#tube)"/>
                    <path d="M268 370l10-4 52 27-8 18-54-31z" fill="#707074"/><path d="M275 374l48 26" stroke="#999" stroke-width="5"/><ellipse cx="325" cy="402" rx="8" ry="10" fill="#939397" stroke="#555"/><circle cx="326" cy="403" r="4" fill="#444"/>
                    <path d="M238 256v72a25 12 0 0 0 50 0v-72z" fill="url(#tube)"/>
                    <path d="M238 256a25 14 0 0 0 50 0" fill="#77777b" stroke="#a0a0a4" stroke-width="3"/>
                    <path d="M280 295l11-3v31l-11 5z" fill="#77777b"/>
                    <path d="M243 236v20a20 11 0 0 0 41 0v-20z" fill="url(#tube)"/>
                    <path d="M226 185l17 58a20 8 0 0 0 40 0l17-58z" fill="url(#tube)"/>
                    <ellipse cx="216" cy="101" rx="7" ry="8" fill="#828286"/>
                    <path d="M222 75v112a40 18 0 0 0 80 0V75z" fill="url(#tube)"/>
                    <path d="M217 72v10a44 26 0 0 0 88 0V72z" fill="#67676b"/>
                    <ellipse cx="261" cy="73" rx="44" ry="25" fill="#919195"/>
                    <path d="M288 132l22 8-4 10-18-10z" fill="#828286"/><circle cx="309" cy="143" r="5" fill="#aaa" stroke="#555"/>
                    <!-- lower flange -->
                    <g transform="translate(0 1740)">
                        <path d="M156 188l14-8v50h-14z" fill="#5a5a5e"/>
                        <path d="M275 335l40 10-3 18-40-20z" fill="#77777b"/><circle cx="312" cy="354" r="7" fill="#aaa" stroke="#555"/>
                        <path d="M252 330h20v56a10 5 0 0 1-20 0z" fill="url(#tube)"/>
                        <path d="M150 243v32a113 67 0 0 0 232 0v-32z" fill="url(#tube)"/>
                        <path d="M150 260v10a113 67 0 0 0 232 0v-10a113 67 0 0 1-232 0z" fill="#97979b"/>
                        <path d="M150 243v16a113 67 0 0 0 232 0v-16z" fill="url(#tube)"/>
                        <ellipse cx="266" cy="243" rx="116" ry="67" fill="#97979b"/>
                        <path d="M171 155v91a91 52 0 0 0 183 0v-91z" fill="url(#tube)"/>
                        <ellipse cx="262.500" cy="155" rx="91" ry="52" fill="#919195"/>
                        <path d="M207 20v136a55 31 0 0 0 111 0V20z" fill="url(#tube)"/>
                        <path d="M355 210l32-5 9 17-20 8h-21z" fill="#97979b"/><path d="M355 226h41v60l-20 6v-36h-21z" fill="#505054"/>
                        <path d="M214 290l10-8h30l-4 20v70l-36-6z" fill="#5e5e62"/><path d="M214 292l12-10h30l-6 22z" fill="#95959a"/><circle cx="235" cy="376" r="10" fill="#67676b"/><circle cx="240" cy="377" r="4" fill="#ccc"/>
                    </g>
                </svg>

                <div class="watermark">
                    <div class="wm-name"><span>莫</span><span>西</span><span>网</span></div>
                    <div class="wm-url">www.3dmox.com</div>
                </div>

                <div class="docbtns">
                    <button aria-label="最小化文档"><svg width="12" height="12"><path d="M.5 6.500h11v3H.5z" fill="#fff" stroke="#444"/></svg></button>
                    <button aria-label="还原文档"><svg width="12" height="12"><path d="M3 3V.5h8.500V9H9M.5 3H9v8.500H.5zM3.500 6h2.500v3H3.500z" fill="none" stroke="#444"/></svg></button>
                    <button aria-label="关闭文档"><svg width="12" height="12"><path d="M1 1h3l2 3 2-3h3v2L9 6l2 3v2H8L6 8l-2 3H1V9l2-3-2-3z" fill="#fff" stroke="#444"/></svg></button>
                </div>

                <svg class="viewcube" width="92" height="100" viewBox="0 0 92 100" role="img" aria-label="ViewCube">
                    <defs><radialGradient id="shade"><stop offset="0" stop-color="#888" stop-opacity=".8"/><stop offset="1" stop-color="#999" stop-opacity="0"/></radialGradient></defs>
                    <ellipse cx="46" cy="70" rx="45" ry="27" fill="url(#shade)"/>
                    <path d="M46 4l36 16-36 20-36-20z" fill="#f3f3f3" stroke="#888"/>
                    <path d="M10 20l36 20v42L14 60z" fill="#ececec" stroke="#888"/>
                    <path d="M82 20 46 40v42l32-22z" fill="#e6e6e6" stroke="#888"/>
                    <path d="M46 33l7 3v7l-7 4-7-4v-7z" fill="#d5d9e0" opacity=".6"/>
                    <text class="face-front" x="18" y="51">前</text>
                    <text class="face-right" x="54" y="67">右</text>
                    <text class="face-top" x="36" y="29">上</text>
                </svg>

                <div class="navbar">
                    <svg width="8" height="8"><circle cx="4" cy="4" r="4" fill="#aaa"/><path d="M2.500 2.500l3 3M5.500 2.500l-3 3" stroke="#fff"/></svg>
                    <button class="nav-wheel" aria-label="控制盘"><svg width="24" height="24"><path d="M12 1h10v11A10.500 10.500 0 1 1 12 1z" fill="#e8eaee" stroke="#999ca3"/><circle cx="12" cy="12" r="6" fill="#f4f4f4" stroke="#999ca3"/><path d="M5 19l3-3M19 19l-3-3" stroke="#999ca3"/></svg></button>
                    <b class="caret"></b>
                    <hr>
                    <button aria-label="平移"><svg width="18" height="18"><path d="M5 16c-1-3-4-5-4-7 1-1 3 1 4 2L3 4c1-1 2 0 2 1l2 4V2c1-1 2-1 2 0l1 6 1-6c1-1 2 0 2 1l-1 6 2-4c1-1 2 0 2 1l-3 8-1 3z" fill="#f0f2f5" stroke="#8d9098"/></svg></button>
                    <button aria-label="缩放"><svg width="18" height="18"><path d="M11.500 12 16 16" stroke="#888" stroke-width="3"/><circle cx="7.500" cy="7.500" r="6.500" fill="#e8efee" stroke="#8d9098"/><path d="M5 4h4l2 2v5H5z" fill="#fff" stroke="#8d9098"/></svg></button>
                    <b class="caret"></b>
                    <button aria-label="动态观察"><svg width="18" height="18"><ellipse cx="9" cy="9" rx="8" ry="4" fill="none" stroke="#8d9098"/><ellipse cx="8" cy="9" rx="3.500" ry="8" fill="none" stroke="#8d9098"/><path d="M11 4v5M8.500 6.500h5" stroke="#8d9098"/></svg></button>
                    <b class="caret"></b>
                    <button aria-label="观察方向"><svg width="18" height="18"><path d="M1.500 6h15v10h-15zM4.500 9.500h9v3h-9z" fill="#e4e6ea" stroke="#8d9098"/><path d="M3 6l5-4v2l5-2v4" fill="none" stroke="#8d9098"/></svg></button>
                    <svg class="nav-end" width="8" height="8"><circle cx="4" cy="4" r="3.500" fill="none" stroke="#aaa"/><path d="M2 3.500h4M3 5.500h2" stroke="#999"/></svg>
                </div>

                <svg class="triad" width="62" height="64" viewBox="0 0 62 64" role="img" aria-label="坐标系">
                    <path d="M31 40V24" stroke="#009a00"/><path d="M31 15l5 9c0 3-10 3-10 0z" fill="#009000"/>
                    <path d="M31 40l-12 7" stroke="#00a"/><path d="M9 52l5-9 6 4v6z" fill="#00008c"/>
                    <path d="M31 40l12 7" stroke="#a00"/><path d="M53 52l-5-10-7 5v6z" fill="#b00000"/>
                    <text x="26" y="13" fill="#4f4">Y</text><text x="2" y="60" fill="#55f">Z</text><text x="52" y="60" fill="#f44">X</text>
                </svg>
            </div>

            <div class="doctabs">
                <button aria-label="层叠"><svg width="16" height="16"><path d="M1 5V1h9M4 9V5h8M6.500 9h8.500v6H6.500z" fill="none" stroke="#ddd" stroke-width="1.500"/></svg></button>
                <button aria-label="平铺"><svg width="16" height="16"><path d="M1 1.500h5.500V6H1zM9.500 1.500H15V6H9.500zM1 10h5.500v4.500H1zM9.500 10H15v4.500H9.500z" fill="none" stroke="#ddd" stroke-width="1.500"/></svg></button>
                <button aria-label="水平排列"><svg width="16" height="16"><path d="M.8 1.500h14.400V6H.8zM.8 10h14.400v4.500H.8z" fill="none" stroke="#ddd" stroke-width="1.500"/></svg></button>
                <button aria-label="垂直排列"><svg width="16" height="16"><path d="M1 1h5v14H1zM10 1h5v14h-5z" fill="none" stroke="#ddd" stroke-width="1.500"/></svg></button>
                <button aria-label="文档列表"><svg width="10" height="8"><path d="M0 8h10L5 0z" fill="#e2e2e2"/></svg></button>
                <button class="dtab">我的主页</button>
                <div class="dtab on"><span>反应管.iam</span><button aria-label="关闭反应管.iam"><svg width="9" height="9"><path d="M1 1l7 7M8 1 1 8" stroke="#444" stroke-width="2"/></svg></button></div>
            </div>
        </main>
    </div>

    <footer class="statusbar">
        <span>就绪</span>
        <div class="ime">
            <svg class="sogou" width="28" height="28" viewBox="0 0 28 28"><path d="M1 4 24 0l4 22-24 5z" fill="#f0562a"/><path d="M21 7c-5-3-13-2-13 2 0 5 12 2 12 7 0 4-7 5-13 2" fill="none" stroke="#fff" stroke-width="4"/></svg>
            <span>中</span>
            <svg viewBox="0 0 18 18"><circle cx="5" cy="6" r="2" fill="none" stroke="#1f78c8" stroke-width="1.500"/><path d="M11 9h4c0 4-1 5-4 6 1-1 2-2 1-3h-1z" fill="#1f78c8"/></svg>
            <svg viewBox="0 0 18 18"><circle cx="9" cy="9" r="7.200" fill="none" stroke="#1f78c8" stroke-width="1.600"/><path d="M6.500 5v3M11.500 5v3M5 10c1 4 7 4 8 0z" stroke="#1f78c8" stroke-width="1.500" fill="none"/></svg>
            <svg viewBox="0 0 18 18"><rect x="6" y="1" width="6" height="10" rx="3" fill="#1f78c8"/><path d="M3 8c0 7 12 7 12 0M9 13v4M6 16.500h6" fill="none" stroke="#1f78c8" stroke-width="1.600"/></svg>
            <svg viewBox="0 0 18 18"><rect x="1" y="3" width="16" height="12" rx="1" fill="#1f78c8"/><path d="M3 6h12M3 9h12" stroke="#fff" stroke-width="1.500" stroke-dasharray="2 1"/><path d="M5 12.500h8" stroke="#fff" stroke-width="1.500"/></svg>
            <svg viewBox="0 0 18 18"><circle cx="8" cy="5" r="3.500" fill="#b0bdd0"/><path d="M1 15c0-7 13-7 14 0z" fill="#b0bdd0"/><rect x="10" y="10" width="6" height="6" rx="2" fill="#fff" stroke="#b0bdd0"/></svg>
            <svg viewBox="0 0 18 18"><path d="M6 2c1 2 5 2 6 0l5 3-2 4-2-1v8H5V8L3 9 1 5z" fill="#1f78c8"/></svg>
            <svg viewBox="0 0 18 18"><path d="M2 2h6v6H2zM2 10h6v6H2zM10 10h6v6h-6z" fill="#1f78c8"/><path d="M11 3h4.500v4.500H11z" fill="none" stroke="#1f78c8" stroke-width="1.500"/></svg>
        </div>
    </footer>
    <div class="taskbar"><div class="task"></div><span class="clock">21:06 周日</span></div>
</body>
</html>
```
FILE: styles.css
```css
* { margin: 0; padding: 0; box-sizing: border-box; }
body {
    height: 100vh;
    display: flex;
    flex-direction: column;
    overflow: hidden;
    font-family: "Open Sans", "Noto Sans CJK SC", sans-serif;
    font-size: 12px;
    line-height: 16px;
    color: #333;
    background: #515151;
}
button {
    background: none;
    border: none;
    font: inherit;
    color: inherit;
    display: flex;
    align-items: center;
    justify-content: center;
}
svg { display: block; flex: none; }
ul { list-style: none; }
.sprite { position: absolute; width: 0; height: 0; }

/* Arrows */
.caret {
    border: 3px solid transparent;
    border-top-color: #333;
    border-bottom: none;
}
.caret.wide { border-width: 4px; border-bottom: none; margin-left: 6px; }
.drop { width: 12px; height: 20px; }
.drop::after {
    content: "";
    border: 3px solid transparent;
    border-top-color: #ddd;
    border-bottom: none;
}
.drop.dim::after { border-top-color: #888; }

/* Title bar */
.titlebar {
    height: 26px;
    flex: none;
    display: flex;
    align-items: flex-start;
    padding-top: 1px;
    background: #515151;
    color: #e0e0e0;
}
.qat, .infocenter { display: flex; align-items: center; height: 22px; }
.tool { width: 24px; height: 22px; }
.pro {
    width: 24px;
    margin-right: 5px;
    flex-direction: column;
    color: #e08a3a;
    font-size: 7px;
    line-height: 8px;
    font-weight: bold;
}
.combo {
    width: 100px;
    height: 21px;
    padding-left: 6px;
    border: none;
    appearance: none;
    opacity: 1;
    font: italic 12px "Open Sans", "Noto Sans CJK SC", sans-serif;
    color: #777;
    background: linear-gradient(45deg, transparent 50%, #5a5a5a 50%) no-repeat right 5px center / 4px 4px,
        linear-gradient(-45deg, transparent 50%, #5a5a5a 50%) no-repeat right 1px center / 4px 4px, #989898;
}
.fx { font: 17px/20px "Liberation Serif", serif; color: #111; }
.fx sub { font-size: 13px; font-style: italic; }
.drop.custom { width: 16px; }
.drop.custom::after { border-width: 5px; border-bottom: none; }
.caption {
    flex: 1;
    display: flex;
    justify-content: center;
    gap: 16px;
    line-height: 22px;
}
.expand { width: 14px; height: 22px; }
.expand::after { content: ""; border: 4px solid transparent; border-left-color: #ddd; border-right: none; }
.search {
    width: 180px;
    height: 21px;
    padding: 0 5px;
    border: none;
    background: #989898;
    font: 12px "Open Sans", "Noto Sans CJK SC", sans-serif;
}
.search::placeholder { color: #dcdcdc; opacity: 1; }
.login { gap: 5px; padding-left: 4px; margin-right: 57px; }
.cart { margin-left: 4px; }
.help { width: 29px; border-left: 1px solid #777; margin-left: 5px; padding-left: 4px; }
.help span {
    width: 16px;
    height: 16px;
    border-radius: 8px;
    background: #fff;
    color: #1d4fa8;
    font-weight: bold;
}
.winbtns { display: flex; gap: 13px; padding: 0 6px 0 22px; }

/* Ribbon tabs */
.tabs { display: flex; align-items: stretch; height: 20px; flex: none; color: #ddd; }
.tab { padding: 0 10px; }
.tab.file { background: #f08327; color: #fff; margin-right: 2px; }
.tab.active { background: #f6f6f6; color: #444; }
.tab-toggle { margin-left: 14px; }

/* Ribbon */
.ribbon { display: flex; height: 94px; flex: none; background: #f6f6f6; }
.panel {
    flex: none;
    display: flex;
    flex-direction: column;
    align-items: center;
    border-right: 1px solid #dcdcdc;
}
.tools { height: 76px; display: flex; width: 100%; padding: 4px 7px 0; }
.panel-title { height: 18px; line-height: 18px; }
.big {
    flex-direction: column;
    justify-content: flex-start;
    align-self: flex-start;
    padding-top: 2px;
}
.big > span { margin-top: 4px; text-align: center; white-space: nowrap; }
.big .caret { margin-top: 3px; }
.stack { display: flex; flex-direction: column; }
.small { height: 24px; gap: 5px; justify-content: flex-start; white-space: nowrap; }
.small:disabled { color: #b5b5b5; }
.small .caret { margin-left: auto; }
.p-component { width: 149px; }
.p-component .tools { justify-content: space-between; padding-left: 13px; padding-right: 5px; }
.p-position { width: 84px; }
.p-relation { width: 184px; }
.p-relation .tools { gap: 6px; padding-left: 5px; }
.p-relation .stack { margin-left: 2px; }
.p-pattern { width: 60px; }
.p-pattern .tools { padding-left: 6px; }
.p-manage { width: 81px; }
.p-manage .tools { gap: 6px; padding-left: 5px; }
.fxbig {
    display: flex;
    height: 32px;
    font: bold 36px/28px "Liberation Serif", serif;
    color: #333840;
}
.fxbig .x { font-size: 28px; line-height: 38px; }
.big .fxbig { margin-top: 0; }
.p-toolset { width: 75px; }
.p-toolset .tools { padding-left: 13px; padding-right: 0; }
.caret.side { margin: 52px 0 0 3px; height: 3px; }
.p-feature { width: 106px; }
.p-feature .tools { gap: 12px; padding-left: 9px; }
.p-feature .stack { flex: 1; }
.p-simplify { width: 125px; }
.p-simplify .tools { padding-left: 5px; justify-content: space-between; padding-right: 4px; }
.ribbon-more {
    width: 36px;
    height: 22px;
    margin: 4px 0 0 3px;
    gap: 7px;
    border: 1px solid #c8c8c8;
    background: #f9f9f9;
}

/* Workspace */
.workspace { flex: 1; display: flex; min-height: 0; }
.browser {
    width: 235px;
    flex: none;
    display: flex;
    flex-direction: column;
    border-right: 4px solid #555;
    background: #fff;
    color: #000;
    font-family: "Noto Sans", "Noto Sans CJK SC", sans-serif;
    font-size: 11px;
}
.browser-tabs { display: flex; height: 24px; flex: none; background: #5f5f5f; padding-right: 4px; gap: 9px; }
.btab { height: 24px; color: #ddd; display: flex; align-items: center; justify-content: center; }
.ilogic { width: 47px; font-family: "DejaVu Sans Mono", monospace; font-size: 10px; margin-right: -9px; }
.btab.on { width: 66px; gap: 14px; background: #fff; color: #555; padding-right: 4px; margin-right: -4px; }
.browser-tabs .add { margin-right: auto; }
.modes { display: flex; align-items: center; height: 33px; flex: none; padding-left: 9px; }
.modes a { color: #555; text-decoration: none; padding-right: 7px; line-height: 14px; }
.modes a + a { border-left: 2px solid #bbb; padding-left: 7px; }
.modes a.current { color: #0a96f0; }
.tree-wrap { flex: 1; display: flex; min-height: 0; }
.tree { flex: 1; overflow: hidden; }
.ico { width: 16px; height: 16px; margin-right: 3px; }
.root { display: flex; align-items: center; height: 20px; padding-left: 3px; font-weight: bold; }
.tree li {
    background: repeating-linear-gradient(#777 0 1px, #fff 1px 2px) no-repeat 9px 0 / 1px 100%;
}
.tree li li:last-child { background-size: 1px 10px; }
.tree ul ul { margin-left: 16px; }
.row {
    display: flex;
    align-items: center;
    height: 20px;
    white-space: nowrap;
    background: repeating-linear-gradient(90deg, #777 0 1px, #fff 1px 2px) no-repeat 15px 10px / 3px 1px;
}
.row.leaf { padding-left: 19px; background-position: 9px 10px; background-size: 9px 1px; }
.twist { width: 15px; height: 20px; margin-right: 4px; padding-left: 4px; }
.twist::before {
    content: "";
    width: 6px;
    height: 6px;
    border: solid #999;
    border-width: 2px 2px 0 0;
    transform: rotate(45deg);
    margin-right: 4px;
}
.twist.open::before { border-color: #333; transform: rotate(135deg); margin: 0 2px 4px 0; }
.scrollbar { width: 17px; margin-right: 1px; display: flex; flex-direction: column; background: #f0f0f0; }
.thumb { height: 667px; min-height: 0; margin-bottom: auto; background: #cdcdcd; }

/* Viewport */
.document { flex: 1; display: flex; flex-direction: column; min-width: 0; background: #fff; }
.canvas { flex: 1; min-height: 0; position: relative; display: flex; justify-content: center; }
.model { width: 180px; height: 720px; margin: 60px 0 0 5px; }
.watermark {
    position: absolute;
    top: 331px;
    left: 50%;
    width: 250px;
    margin-left: -243px;
    opacity: .55;
    color: #fff;
    text-align: center;
    text-shadow: 1px 2px 2px #222, 0 0 2px #555;
}
.wm-name {
    display: flex;
    justify-content: center;
    gap: 23px;
    font: 500 56px/72px "Noto Sans CJK SC", sans-serif;
}
.wm-url { font: bold 32px/28px "DejaVu Sans Mono", monospace; white-space: nowrap; }
.docbtns { position: absolute; top: 6px; right: 2px; display: flex; gap: 8px; }
.viewcube { position: absolute; top: 45px; right: 16px; }
.viewcube text { font: 20px "Noto Sans CJK SC", sans-serif; fill: #a9adb5; transform-box: fill-box; transform-origin: center; }
.face-front { transform: skewY(29deg); }
.face-right { transform: skewY(-29deg); }
.face-top { transform: rotate(-29deg) skewX(-30deg); }
.navbar {
    position: absolute;
    top: 144px;
    right: 0;
    width: 36px;
    display: flex;
    flex-direction: column;
    align-items: center;
    gap: 6px;
    padding: 2px 0 4px;
    border: 2px solid #bdbdbd;
    border-radius: 5px;
    background: #f3f3f3;
}
.navbar > svg { margin: 2px 3px 2px auto; }
.navbar hr { width: 26px; border: none; border-top: 1px solid #bbb; }
.navbar .caret { border-top-color: #888; }
.triad { position: absolute; left: 22px; bottom: 28px; }
.triad text { font: 14px "Liberation Serif", serif; }

/* Document tabs */
.doctabs { display: flex; height: 24px; flex: none; background: #5f5f5f; color: #e4e4e4; }
.doctabs > button { width: 24px; }
.doctabs .dtab { display: flex; align-items: center; width: 68px; border-left: 1px solid #999; padding-top: 1px; }
.doctabs .dtab.on { width: 97px; gap: 8px; justify-content: center; background: #f5f5f5; color: #444; border-right: 1px solid #999; padding-right: 2px; }

/* Status bar and taskbar */
.statusbar {
    height: 24px;
    flex: none;
    display: flex;
    justify-content: space-between;
    align-items: center;
    padding-left: 1px;
    background: #f5f5f5;
    color: #000;
}
.ime {
    height: 24px;
    display: flex;
    align-items: center;
    gap: 4px;
    padding-right: 1px;
    border-top: 1px solid #b5b5b5;
    background: #fff;
    color: #1f78c8;
}
.ime svg { width: 18px; height: 18px; }
.ime .sogou { width: 28px; height: 28px; margin-right: 2px; }
.ime span { font-size: 16px; font-weight: bold; width: 18px; }
.taskbar {
    height: 8px;
    flex: none;
    display: flex;
    justify-content: space-between;
    overflow: hidden;
    padding-left: 364px;
    background: #060a10;
    color: #fff;
}
.task { width: 48px; background: #3a3f47; }
.clock { line-height: 20px; width: 158px; white-space: nowrap; }
```
